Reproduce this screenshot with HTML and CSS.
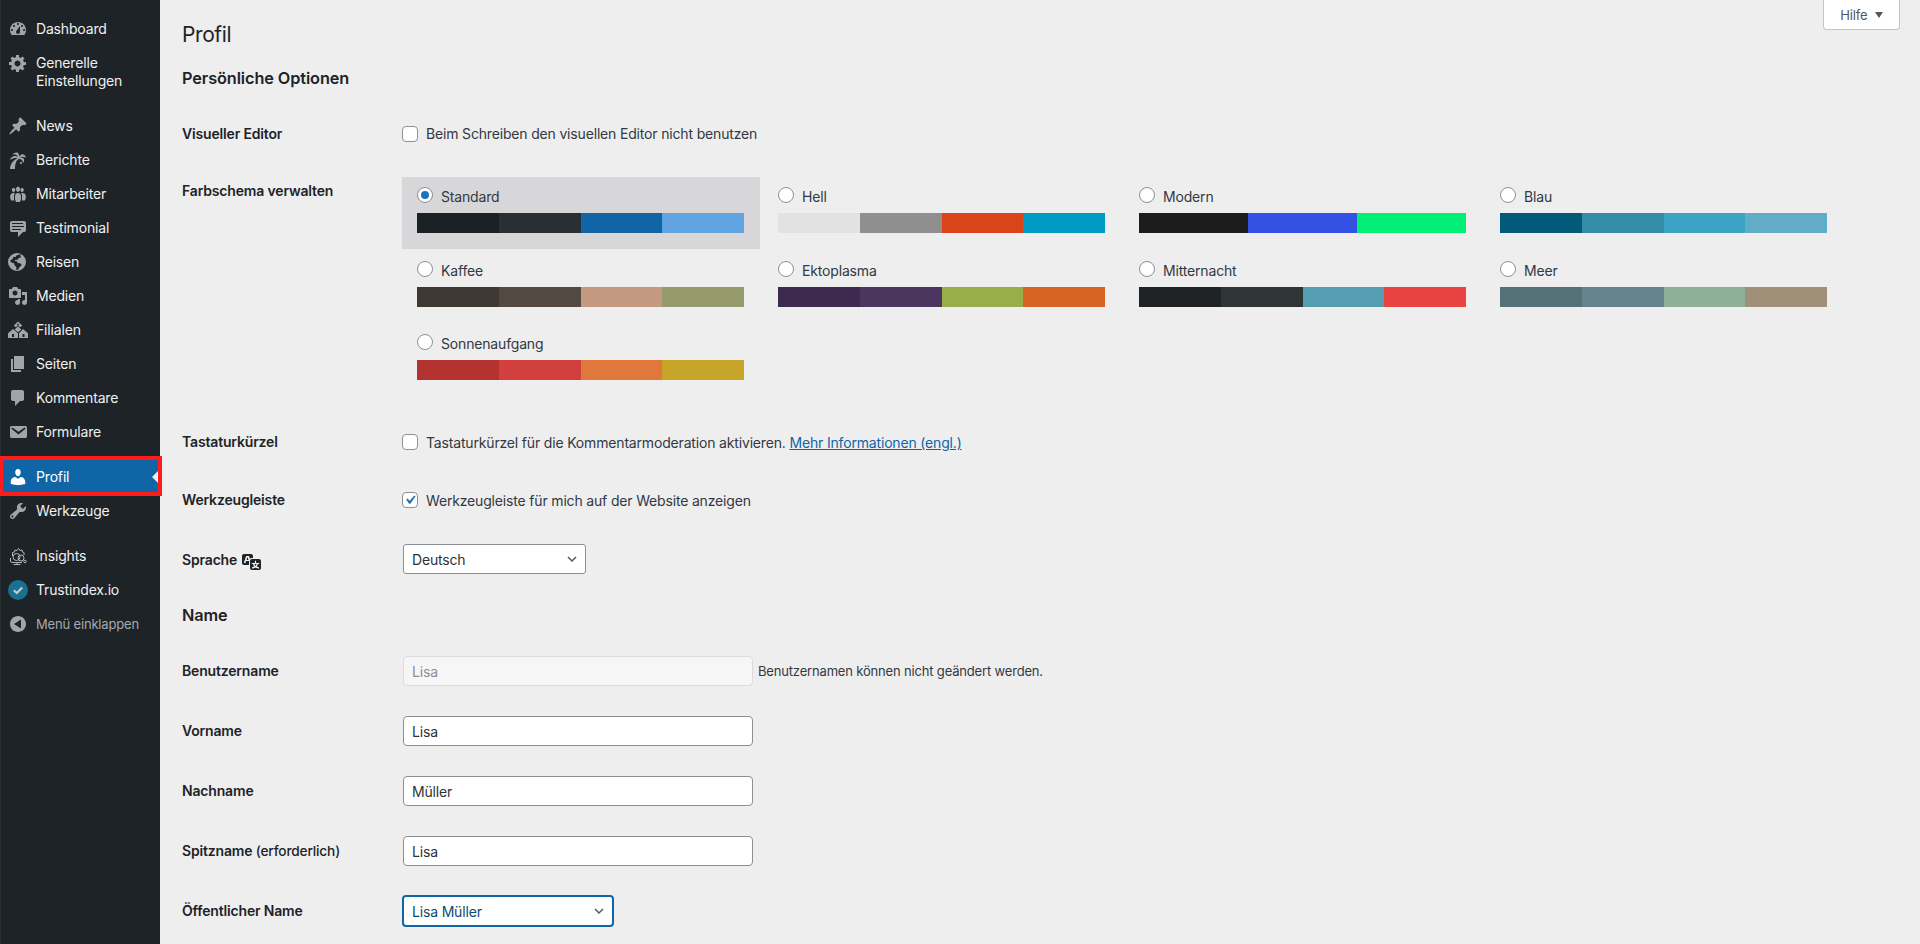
FILE: index.html
```html
<!DOCTYPE html>
<html lang="de">
<head>
<meta charset="utf-8">
<title>Profil</title>
<link rel="stylesheet" href="styles.css">
</head>
<body>
<div class="app">
<nav class="side">
  <ul class="menu">
    <li class="mi"><svg viewBox="0 0 20 20"><path fill-rule="evenodd" d="M3.76 16h12.48c1.1-1.37 1.76-3.11 1.76-5 0-4.42-3.58-8-8-8s-8 3.58-8 8c0 1.89.66 3.63 1.76 5zM10 4c.55 0 1 .45 1 1s-.45 1-1 1-1-.45-1-1 .45-1 1-1zM6 6c.55 0 1 .45 1 1s-.45 1-1 1-1-.45-1-1 .45-1 1-1zm8 0c.55 0 1 .45 1 1s-.45 1-1 1-1-.45-1-1 .45-1 1-1zm-5.37 5.55L12 7v6c0 1.1-.9 2-2 2s-2-.9-2-2c0-.57.24-1.08.63-1.45zM4 10c.55 0 1 .45 1 1s-.45 1-1 1-1-.45-1-1 .45-1 1-1zm12 0c.55 0 1 .45 1 1s-.45 1-1 1-1-.45-1-1 .45-1 1-1z"/></svg><span>Dashboard</span></li>
    <li class="mi"><svg viewBox="0 0 20 20"><path d="M18 12h-2.18c-.17.7-.44 1.35-.81 1.93l1.54 1.54-2.1 2.1-1.54-1.54c-.58.36-1.23.63-1.91.79V19H8v-2.18c-.68-.16-1.33-.43-1.91-.79l-1.54 1.54-2.12-2.12 1.54-1.54c-.36-.58-.63-1.23-.79-1.91H1V9.03h2.17c.16-.7.44-1.35.8-1.94L2.43 5.55l2.1-2.1 1.54 1.54c.58-.37 1.24-.64 1.93-.81V2h3v2.18c.68.16 1.33.43 1.91.79l1.54-1.54 2.12 2.12-1.54 1.54c.36.59.64 1.24.8 1.94H18V12zm-8.5 1.5c1.66 0 3-1.34 3-3s-1.34-3-3-3-3 1.34-3 3 1.34 3 3 3z"/></svg><span>Generelle<br>Einstellungen</span></li>
    <li class="sep"></li>
    <li class="mi"><svg viewBox="0 0 20 20"><path d="M10.44 3.02l1.82-1.82 6.36 6.35-1.83 1.82c-1.05-.68-2.48-.57-3.41.36l-.75.75c-.92.93-1.04 2.35-.35 3.41l-1.83 1.82-2.41-2.41-2.8 2.79c-.42.42-3.38 2.71-3.8 2.29s1.86-3.39 2.28-3.81l2.79-2.79L4.1 9.36l1.83-1.82c1.05.69 2.48.57 3.4-.36l.75-.75c.93-.92 1.05-2.35.36-3.41z"/></svg><span>News</span></li>
    <li class="mi"><svg viewBox="0 0 20 20"><path d="M8.58 2.39c.32 0 .59.05.81.14 1.25.55 1.69 2.24 1.7 3.97.59-.82 2.15-2.29 3.41-2.29s2.94.73 3.53 3.55c-1.13-.65-2.42-.94-3.65-.94-1.26 0-2.45.32-3.29.89.4-.11.86-.16 1.33-.16 1.39 0 2.9.45 3.4 1.31.68 1.16.47 3.38-.76 4.14-.14-2.1-1.69-4.12-3.47-4.12-.44 0-.88.12-1.33.38C8 10.62 7 14.56 7 19H2c0-5.53 4.21-9.65 7.68-10.79-.56-.09-1.17-.15-1.82-.15C6.1 8.06 4.05 8.5 2 10c.76-2.96 2.78-4.1 4.69-4.1 1.25 0 2.45.5 3.2 1.29-.66-2.24-2.49-2.86-4.08-2.86-.8 0-1.55.16-2.05.35.91-1.29 3.31-2.29 4.82-2.29zM13 11.99c.59 0 1 .41 1 1 0 .59-.41 1-1 1s-1-.41-1-1c0-.59.41-1 1-1z"/></svg><span>Berichte</span></li>
    <li class="mi"><svg viewBox="0 0 20 20"><path d="M8.03 4.46c-.29 1.28.55 3.46 1.97 3.46 1.41 0 2.25-2.18 1.96-3.46-.22-.98-1.08-1.63-1.96-1.63-.89 0-1.74.65-1.97 1.63zm-4.13.9c-.25 1.08.47 2.93 1.68 2.93s1.94-1.85 1.69-2.93c-.19-.83-.94-1.39-1.69-1.39s-1.49.56-1.68 1.39zm8.52 0c-.25 1.08.47 2.93 1.69 2.93 1.2 0 1.93-1.85 1.68-2.93-.19-.83-.94-1.39-1.68-1.39-.75 0-1.5.56-1.69 1.39zM10 9c-1.7 0-3 1.3-3 3v3c0 1 .8 2 1 3h4c.2-1 1-2 1-3v-3c0-1.7-1.3-3-3-3zM5.4 9C3.8 9 2.2 10.3 2.2 12v2c0 .8.7 1.5.9 2.5h3.1C6.1 15.5 6 15 6 14v-2c0-1.2.3-2.2 1-3zM14.6 9c1.6 0 3.2 1.3 3.2 3v2c0 .8-.7 1.5-.9 2.5h-3.1c.1-1 .2-1.5.2-2.5v-2c0-1.2-.3-2.2-1-3z"/></svg><span>Mitarbeiter</span></li>
    <li class="mi"><svg viewBox="0 0 20 20"><path fill-rule="evenodd" d="M4 3h12c.55 0 1.02.2 1.41.59S18 4.45 18 5v7c0 .55-.2 1.02-.59 1.41S16.55 14 16 14h-1l-5 5v-5H4c-.55 0-1.02-.2-1.41-.59S2 12.55 2 12V5c0-.55.2-1.02.59-1.41S3.45 3 4 3zm11 2H4v1h11V5zm1 3H4v1h12V8zm-3 3H4v1h9v-1z"/></svg><span>Testimonial</span></li>
    <li class="mi"><svg viewBox="0 0 20 20"><path fill-rule="evenodd" d="M9 1a9 9 0 1 1 0 18A9 9 0 0 1 9 1zM11.5 2.6c-.8.6-2.2.4-3 .9-.6.4-.2 1.2-1 1.4-.9.2-1.400-.4-2.100.2-.6.5-.2 1.300-.8 1.800-.7.6-1.800.6-2.200 1.500-.3.8.3 1.600 1 2 .8.5 1.800.2 2.500.8.700.600.300 1.700.9 2.400.5.600 1.300.800 1.500 1.600.2.900-.2 1.800.2 2.500.3.500 1.100.4 1.500 0 .7-.7.700-1.700 1.400-2.400.7-.7 1.700-1 2-2 .3-.8-.4-1.500-1.100-1.800-.9-.4-1.900-.1-2.700-.7-.5-.4-.4-1.200-1-1.500-.5-.2-1.100.1-1.500-.3-.4-.5 0-1.200.6-1.300.7-.2 1.200.4 1.800.1.600-.3.300-1.200.9-1.600.7-.5 1.600 0 2.200-.6.400-.4.100-1 0-1.500-.2-.5-.5-.8 0-1.200.2-.1.500-.2.600-.4z"/></svg><span>Reisen</span></li>
    <li class="mi"><svg viewBox="0 0 20 20"><path fill-rule="evenodd" d="M13 11V4c0-.55-.45-1-1-1h-1.670L9 1H5L3.670 3H2c-.55 0-1 .45-1 1v7c0 .55.45 1 1 1h10c.55 0 1-.45 1-1zM7 4.500c1.380 0 2.500 1.120 2.500 2.500S8.380 9.500 7 9.500 4.500 8.380 4.500 7 5.620 4.500 7 4.500zM14 6h5v10.500c0 1.380-1.120 2.500-2.500 2.500S14 17.880 14 16.500s1.120-2.500 2.500-2.500c.17 0 .34.02.5.05V9h-3V6zm-4 8.050V13h2v3.500c0 1.380-1.120 2.500-2.500 2.500S7 17.880 7 16.500 8.120 14 9.500 14c.17 0 .34.02.5.05z"/></svg><span>Medien</span></li>
    <li class="mi"><svg viewBox="0 0 20 20"><path fill-rule="evenodd" d="M10 1.500l4.200 3.900-2 1.800L10 5.200 7.800 7.200l-2-1.800L10 1.500zM10 3.400L8.900 4.500 10 5.600l1.100-1.100L10 3.400zM5 9l5 4.300V18H0v-4.700L5 9zM4 14v3h2v-3H4zM15 9l5 4.300V18h-9v-4.700L15 9zM14.500 14v3h2v-3h-2zM10 6.300l3.300 3.100-1.500 1.300L10 12.200 8.200 10.700 6.700 9.400 10 6.300z"/></svg><span>Filialen</span></li>
    <li class="mi"><svg viewBox="0 0 20 20"><path d="M6 15V2h10v13H6zm-1 1h8v2H3V5h2v11z"/></svg><span>Seiten</span></li>
    <li class="mi"><svg viewBox="0 0 20 20"><path d="M5 2h9c1.100 0 2 .9 2 2v7c0 1.100-.9 2-2 2h-2l-5 5v-5H5c-1.100 0-2-.9-2-2V4c0-1.100.9-2 2-2z"/></svg><span>Kommentare</span></li>
    <li class="mi"><svg viewBox="0 0 20 20"><path d="M3.870 4h13.250C18.370 4 19 4.590 19 5.790v8.420c0 1.190-.63 1.790-1.880 1.790H3.870c-1.250 0-1.880-.6-1.880-1.790V5.790c0-1.200.63-1.790 1.880-1.790zm6.620 8.600l6.740-5.530c.24-.2.43-.66.13-1.070-.29-.41-.82-.42-1.170-.17l-5.700 3.860L4.800 5.830c-.35-.25-.88-.24-1.170.17-.3.41-.11.87.13 1.070z"/></svg><span>Formulare</span></li>
    <li class="sep2"></li>
    <li class="mi cur"><svg viewBox="0 0 20 20"><path d="M10 9.250c-2.270 0-2.730-3.440-2.730-3.440C7 4.020 7.820 2 9.970 2c2.160 0 2.980 2.020 2.710 3.810 0 0-.41 3.440-2.680 3.440zm0 2.570L12.720 10c2.390 0 4.520 2.330 4.520 4.530v2.490s-3.650 1.130-7.240 1.130c-3.650 0-7.240-1.130-7.240-1.130v-2.490c0-2.250 1.940-4.480 4.470-4.480z"/></svg><span>Profil</span></li>
    <li class="mi"><svg viewBox="0 0 20 20"><path fill-rule="evenodd" d="M16.680 9.770c-1.340 1.340-3.300 1.670-4.950.99l-5.410 6.520c-.99.99-2.590.99-3.580 0s-.99-2.590 0-3.570l6.520-5.420c-.68-1.650-.35-3.610.99-4.950 1.280-1.280 3.120-1.620 4.720-1.060l-2.890 2.890 2.820 2.820 2.860-2.870c.53 1.580.18 3.390-1.080 4.650zM3.810 16.210c.4.39 1.040.39 1.430 0 .4-.4.4-1.040 0-1.430-.39-.4-1.030-.4-1.430 0-.39.39-.39 1.030 0 1.430z"/></svg><span>Werkzeuge</span></li>
    <li class="sep2"></li>
    <li class="mi"><svg viewBox="0 0 20 20" class="line"><path d="M4.500 10V6.500L6.500 6l.5-2 2 .5L10.500 2.500l1.500 2 2-.5.500 2 1.500.5V9M2.500 12v3c0 .8.5 1.500 1.300 1.500H14M5.500 18.500h7M9 16.500v2"/><circle cx="8.500" cy="11" r="3.500"/><circle cx="13" cy="12" r="3"/><circle cx="17" cy="15.500" r="1.300"/></svg><span>Insights</span></li>
    <li class="mi"><svg viewBox="0 0 20 20"><circle cx="10" cy="10" r="10" fill="#19708f"/><path d="M5.800 10.300l3 2.700 5.400-5.600" fill="none" stroke="#c6c9cc" stroke-width="2.200"/></svg><span>Trustindex.io</span></li>
    <li class="mi coll"><svg viewBox="0 0 20 20"><path fill-rule="evenodd" d="M18 10c0-4.420-3.580-8-8-8s-8 3.580-8 8 3.580 8 8 8 8-3.580 8-8zm-5 4.500L6 10l7-4.500v9z"/></svg><span>Menü einklappen</span></li>
  </ul>
</nav>
<main class="main">
  <button class="help" type="button">Hilfe <i class="tri"></i></button>
  <h1>Profil</h1>
  <h2 class="h-first">Persönliche Optionen</h2>
  <div class="row r-visual">
    <div class="lbl">Visueller Editor</div>
    <label class="val"><input class="cb" type="checkbox"><span class="cbt">Beim Schreiben den visuellen Editor nicht benutzen</span></label>
  </div>
  <div class="row r-scheme">
    <div class="lbl">Farbschema verwalten</div>
    <div class="picker">
      <div class="opt sel"><label><input class="rd" type="radio" name="s" checked>Standard</label><div class="pal"><i style="background:#1c2125"></i><i style="background:#292f33"></i><i style="background:#0f65a6"></i><i style="background:#60a3e0"></i></div></div>
      <div class="opt"><label><input class="rd" type="radio" name="s">Hell</label><div class="pal"><i style="background:#e2e2e2"></i><i style="background:#8f8f8f"></i><i style="background:#da4518"></i><i style="background:#009ac5"></i></div></div>
      <div class="opt"><label><input class="rd" type="radio" name="s">Modern</label><div class="pal"><i style="background:#1c1c1c"></i><i style="background:#3351e3"></i><i style="background:#00f076"></i></div></div>
      <div class="opt"><label><input class="rd" type="radio" name="s">Blau</label><div class="pal"><i style="background:#005a78"></i><i style="background:#338ca8"></i><i style="background:#3ca3c4"></i><i style="background:#61acc6"></i></div></div>
      <div class="opt"><label><input class="rd" type="radio" name="s">Kaffee</label><div class="pal"><i style="background:#3f3934"></i><i style="background:#524942"></i><i style="background:#c39a80"></i><i style="background:#949a6c"></i></div></div>
      <div class="opt"><label><input class="rd" type="radio" name="s">Ektoplasma</label><div class="pal"><i style="background:#3c2b4e"></i><i style="background:#4b3660"></i><i style="background:#97ae49"></i><i style="background:#d86423"></i></div></div>
      <div class="opt"><label><input class="rd" type="radio" name="s">Mitternacht</label><div class="pal"><i style="background:#1f2326"></i><i style="background:#2f3437"></i><i style="background:#559eb2"></i><i style="background:#e84340"></i></div></div>
      <div class="opt"><label><input class="rd" type="radio" name="s">Meer</label><div class="pal"><i style="background:#537176"></i><i style="background:#64838c"></i><i style="background:#90af98"></i><i style="background:#a19079"></i></div></div>
      <div class="opt"><label><input class="rd" type="radio" name="s">Sonnenaufgang</label><div class="pal"><i style="background:#b33331"></i><i style="background:#d23f3f"></i><i style="background:#e0783b"></i><i style="background:#c6a528"></i></div></div>
    </div>
  </div>
  <div class="row r-keys">
    <div class="lbl">Tastaturkürzel</div>
    <label class="val"><input class="cb" type="checkbox"><span class="cbt low">Tastaturkürzel für die Kommentarmoderation aktivieren. <a href="#">Mehr Informationen (engl.)</a></span></label>
  </div>
  <div class="row r-bar">
    <div class="lbl">Werkzeugleiste</div>
    <label class="val"><input class="cb" type="checkbox" checked><span class="cbt low">Werkzeugleiste für mich auf der Website anzeigen</span></label>
  </div>
  <div class="row r-lang">
    <div class="lbl">Sprache <svg class="tr" viewBox="0 0 20 20"><path fill-rule="evenodd" d="M11 7H9.490c-.63 0-1.250.3-1.590.7L7 5H4.130l-2.390 7h1.690l.74-2H7v4H2c-1.100 0-2-.9-2-2V5c0-1.100.9-2 2-2h7c1.100 0 2 .9 2 2v2zM6.510 9H4.490l1-2.930zM10 8h7c1.100 0 2 .9 2 2v7c0 1.100-.9 2-2 2h-7c-1.100 0-2-.9-2-2v-7c0-1.100.9-2 2-2zm7.250 5v-1.080h-3.170V9.750h-1.160v2.170H9.750V13h1.280c.11.850.56 1.850 1.280 2.620-.87.360-1.890.620-2.310.620-.01.020.22.970.2 1.460.840 0 2.210-.5 3.280-1.150 1.090.650 2.480 1.150 3.340 1.150-.02-.49.2-1.440.2-1.460-.43 0-1.490-.27-2.380-.63.7-.77 1.140-1.770 1.250-2.610h1.360zm-3.810 1.930c-.5-.46-.85-1.130-1.010-1.930h2.090c-.17.8-.51 1.470-1 1.930l-.04.03s-.03-.02-.04-.03z"/></svg></div>
    <select class="sel-lang"><option>Deutsch</option></select>
  </div>
  <h2 class="h-name">Name</h2>
  <div class="row r-f">
    <div class="lbl">Benutzername</div>
    <div class="val"><input class="txt dis" type="text" value="Lisa" disabled><span class="note">Benutzernamen können nicht geändert werden.</span></div>
  </div>
  <div class="row r-f"><div class="lbl">Vorname</div><input class="txt" type="text" value="Lisa"></div>
  <div class="row r-f"><div class="lbl">Nachname</div><input class="txt" type="text" value="Müller"></div>
  <div class="row r-f"><div class="lbl">Spitzname <span class="req">(erforderlich)</span></div><input class="txt" type="text" value="Lisa"></div>
  <div class="row r-f"><div class="lbl">Öffentlicher Name</div><select class="sel-name"><option>Lisa Müller</option></select></div>
</main>
</div>
</body>
</html>
```
FILE: styles.css
```css
html, body { margin: 0; height: 944px; overflow: hidden; background: #eeeeef; }
body { font-family: Inter, "Noto Sans", sans-serif; font-size: 14px; color: #2c3338; line-height: 20px; letter-spacing: -.17px; }
* { box-sizing: border-box; }
.app { display: flex; height: 944px; }
.side { width: 160px; flex: none; background: #1d2327; border-left: 1px solid #2a3034; }
.menu { list-style: none; margin: 0; padding: 12px 0 0; }
.mi { display: flex; align-items: flex-start; padding: 8px 8px 8px 7px; color: #f0f0f1; position: relative; min-height: 34px; line-height: 18px; }
.mi > svg { width: 20px; height: 20px; flex: none; fill: #a0a5aa; margin: -1px 8px -1px 0; }
.mi > svg.line { fill: none; stroke: #b4b7ba; stroke-width: 1; }
.mi > span { display: block; }
.sep { height: 11px; }
.sep2 { height: 11px; }
.cur { background: #0f65a6; color: #fff; }
.cur > svg { fill: #fff; }
.cur::before { content: ""; position: absolute; left: -1px; right: -2px; top: -4px; bottom: -2px; border: 4px solid #ff1c1c; border-left-width: 3px; pointer-events: none; }
.cur::after { content: ""; position: absolute; right: 2px; top: 11px; border: 6px solid transparent; border-right-color: #eeeeef; border-left: 0; }
.coll { color: #a7aaad; font-size: 13px; }
.main { flex: 1; position: relative; padding: 0 0 0 22px; min-width: 0; }
.help { position: absolute; right: 20px; top: -1px; width: 77px; height: 31px; background: #fff; border: 1px solid #c3c4c7; border-top: 0; border-radius: 0 0 4px 4px; color: #50575e; font: 13px/30px Inter, sans-serif; letter-spacing: -.17px; padding: 1px 0 0; }
.tri { display: inline-block; width: 0; height: 0; border: 4.500px solid transparent; border-top: 6px solid #50575e; border-bottom: 0; margin-left: 4px; vertical-align: 2px; }
h1 { margin: 0; padding-top: 20px; font-size: 21px; font-weight: 400; line-height: 30px; color: #1d2327; letter-spacing: -.4px; }
h2 { margin: 0; font-size: 16.300px; font-weight: 600; line-height: 22px; color: #1d2327; letter-spacing: -.1px; }
.h-first { margin-top: 17px; }
.h-name { margin-top: 2px; height: 37px; }
.row { display: flex; }
.lbl { width: 221px; flex: none; font-weight: 600; color: #1d2327; }
.r-visual { padding-top: 35px; height: 73px; }
.val { display: flex; align-items: flex-start; }
.cb { appearance: none; width: 16px; height: 16px; margin: 2px 8px 0 -1px; background: #fff; border: 1px solid #8c8f94; border-radius: 4px; flex: none; }
.cb:checked { background: #fff url("data:image/svg+xml,%3Csvg xmlns='http://www.w3.org/2000/svg' viewBox='0 0 20 20'%3E%3Cpath fill='%232271b1' d='M14.83 4.890l1.340.94-5.810 8.380H9.020L5.780 9.670l1.340-1.250 2.570 2.400z'/%3E%3C/svg%3E") center/18px no-repeat; }
.cbt { color: #32393f; }
.low { padding-top: 1px; }
a { color: #0f65a6; text-decoration: underline; }
.r-scheme { height: 270px; align-items: flex-start; }
.r-scheme .lbl { padding-top: 19px; }
.picker { display: grid; grid-template-columns: repeat(4, 358px); column-gap: 3px; row-gap: 2px; margin-top: 15px; margin-left: -1px; }
.opt { height: 71.500px; padding: 9px 15px 0; }
.opt.sel { background: #d7d7da; }
.opt label { display: flex; align-items: center; height: 21px; padding-top: 1px; color: #32393f; margin-bottom: 6px; }
.pal { display: flex; height: 20px; width: 327px; }
.rd { appearance: none; width: 16px; height: 16px; margin: 0 8px 0 0; background: #fff; border: 1px solid #8c8f94; border-radius: 50%; position: relative; top: -2px; flex: none; }
.rd:checked::before { content: ""; display: block; width: 8px; height: 8px; margin: 3px; border-radius: 50%; background: #1a73c0; }
.pal i { flex: 1; }
.r-keys { height: 58px; }
.r-bar { height: 54px; }
.r-lang { height: 58px; }
.r-lang .lbl { padding-top: 6px; display: flex; align-items: flex-start; gap: 5px; }
.tr { width: 20px; height: 20px; fill: #1d2327; margin-top: 1px; }
select { appearance: none; height: 30px; font: 14px Inter, sans-serif; letter-spacing: -.17px; color: #2c3338; border: 1px solid #8c8f94; border-radius: 3px; padding: 0 24px 0 8px; background: #fff url("data:image/svg+xml,%3Csvg xmlns='http://www.w3.org/2000/svg' viewBox='0 0 20 20'%3E%3Cpath fill='none' stroke='%2350575e' stroke-width='1.800' d='M5 7.500l5 5 5-5'/%3E%3C/svg%3E") right 5px center/16px no-repeat; }
.sel-lang { width: 183px; }
.sel-name { width: 212px; color: #0a4b78; border: 2px solid #0f65a6; height: 32px; margin: -1px 0 0 -1px; padding-left: 8px; border-radius: 4px; }
.r-f { height: 60px; padding-top: 15px; }
.r-f .lbl { padding-top: 5px; }
.txt { width: 350px; height: 30px; font: 14px Inter, sans-serif; letter-spacing: -.17px; color: #2c3338; border: 1px solid #8c8f94; border-radius: 4px; padding: 0 8px; background: #fff; }
.txt.dis { background: #f6f6f7; border-color: #dcdcde; color: #8c8f94; }
.note { font-size: 13px; color: #32393f; margin-left: 5px; line-height: 30px; }
.req { font-size: 13.700px; font-weight: 500; }
```
